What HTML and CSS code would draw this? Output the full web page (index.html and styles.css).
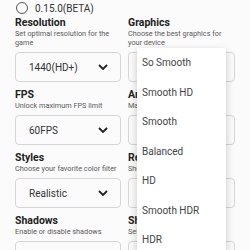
FILE: index.html
```html
<!DOCTYPE html>
<html>
<head>
<meta charset="utf-8">
<link rel="stylesheet" href="styles.css">
</head>
<body>
<div class="page">
  <div class="radio-row">
    <span class="radio"></span>
    <span class="radio-label">0.15.0(BETA)</span>
  </div>
  <div class="grid">
    <div class="field">
      <div class="title">Resolution</div>
      <div class="desc desc-narrow">Set optimal resolution for the game</div>
      <div class="select"><span>1440(HD+)</span><svg class="chev" viewBox="0 0 10 6" width="10" height="6"><path d="M1 1 L5 5 L9 1" fill="none" stroke="#222" stroke-width="1.8"/></svg></div>
    </div>
    <div class="field">
      <div class="title">Graphics</div>
      <div class="desc">Choose the best graphics for your device</div>
      <div class="select"><span>So Smooth</span><svg class="chev" viewBox="0 0 10 6" width="10" height="6"><path d="M1 1 L5 5 L9 1" fill="none" stroke="#222" stroke-width="1.8"/></svg></div>
    </div>
    <div class="field">
      <div class="title">FPS</div>
      <div class="desc">Unlock maximum FPS limit</div>
      <div class="select"><span>60FPS</span><svg class="chev" viewBox="0 0 10 6" width="10" height="6"><path d="M1 1 L5 5 L9 1" fill="none" stroke="#222" stroke-width="1.8"/></svg></div>
    </div>
    <div class="field">
      <div class="title">Anti-aliasing</div>
      <div class="desc">Make edges smoother</div>
      <div class="select"><span>Off</span><svg class="chev" viewBox="0 0 10 6" width="10" height="6"><path d="M1 1 L5 5 L9 1" fill="none" stroke="#222" stroke-width="1.8"/></svg></div>
    </div>
    <div class="field">
      <div class="title">Styles</div>
      <div class="desc">Choose your favorite color filter</div>
      <div class="select"><span>Realistic</span><svg class="chev" viewBox="0 0 10 6" width="10" height="6"><path d="M1 1 L5 5 L9 1" fill="none" stroke="#222" stroke-width="1.8"/></svg></div>
    </div>
    <div class="field">
      <div class="title">Rendering</div>
      <div class="desc">Show rendering quality</div>
      <div class="select"><span>Default</span><svg class="chev" viewBox="0 0 10 6" width="10" height="6"><path d="M1 1 L5 5 L9 1" fill="none" stroke="#222" stroke-width="1.8"/></svg></div>
    </div>
    <div class="field">
      <div class="title">Shadows</div>
      <div class="desc">Enable or disable shadows</div>
      <div class="select"><span>Enable</span><svg class="chev" viewBox="0 0 10 6" width="10" height="6"><path d="M1 1 L5 5 L9 1" fill="none" stroke="#222" stroke-width="1.8"/></svg></div>
    </div>
    <div class="field">
      <div class="title">Shading</div>
      <div class="desc">Select shading level</div>
      <div class="select"><span>Default</span><svg class="chev" viewBox="0 0 10 6" width="10" height="6"><path d="M1 1 L5 5 L9 1" fill="none" stroke="#222" stroke-width="1.8"/></svg></div>
    </div>
  </div>
  <ul class="menu">
    <li>So Smooth</li>
    <li>Smooth HD</li>
    <li>Smooth</li>
    <li>Balanced</li>
    <li>HD</li>
    <li>Smooth HDR</li>
    <li>HDR</li>
  </ul>
</div>
</body>
</html>
```
FILE: styles.css
```css
html, body {
  margin: 0;
  padding: 0;
  background: #fbfbfb;
  overflow: hidden;
}
body {
  font-family: Roboto, "Noto Sans", Arial, sans-serif;
  color: #222;
  width: 250px;
  height: 250px;
}
.page {
  position: relative;
  height: 250px;
  overflow: hidden;
}
.radio-row {
  display: flex;
  align-items: center;
  gap: 7px;
  padding: 2px 0 0 16px;
  height: 12px;
}
.radio {
  width: 10px;
  height: 10px;
  border: 1px solid #555;
  border-radius: 50%;
  box-sizing: content-box;
}
.radio-label {
  font-size: 10px;
  color: #333;
}
.grid {
  display: grid;
  grid-template-columns: 106px 107px;
  column-gap: 7px;
  padding: 0 15px;
}
.field {
  padding-top: 6px;
}
.grid .field:nth-child(1),
.grid .field:nth-child(2) {
  padding-top: 2px;
}
.title {
  font-weight: 700;
  font-size: 10.5px;
  line-height: 13px;
  color: #222;
}
.desc {
  font-size: 7.3px;
  line-height: 9px;
  color: #5a5a5a;
  margin-bottom: 5px;
}
.desc-narrow {
  max-width: 96px;
}
.select {
  height: 30px;
  box-sizing: border-box;
  border: 1px solid #d6d6d6;
  border-radius: 4px;
  display: flex;
  align-items: center;
  justify-content: space-between;
  padding: 0 12px 0 13px;
  font-size: 10px;
  color: #333;
}
.chev {
  display: block;
}
.menu {
  position: absolute;
  left: 137px;
  top: 48px;
  width: 89px;
  margin: 0;
  padding: 0;
  list-style: none;
  background: #fff;
  box-shadow: 0 3px 8px rgba(0, 0, 0, 0.22);
}
.menu li {
  height: 29.5px;
  line-height: 29.5px;
  padding-left: 5px;
  font-size: 10px;
  color: #444;
}
```
